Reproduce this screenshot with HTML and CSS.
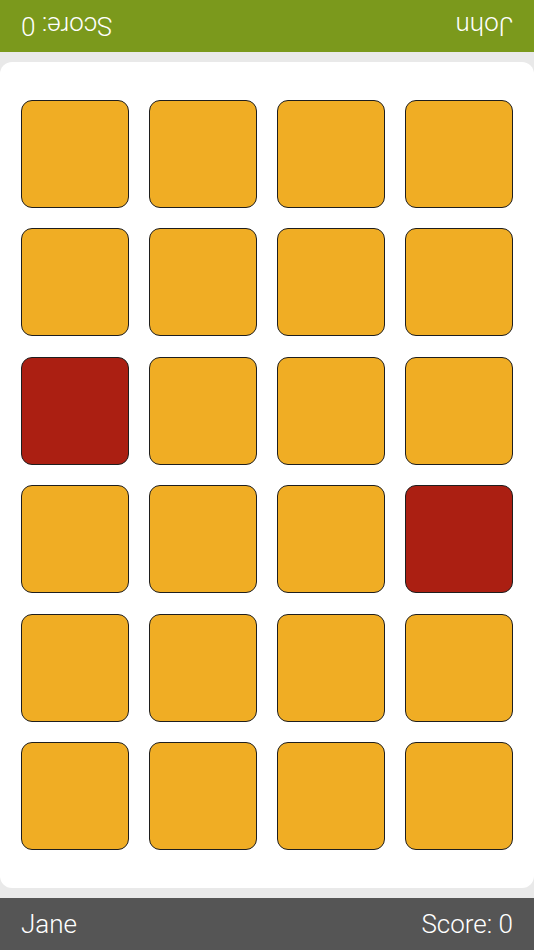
FILE: index.html
```html
<!DOCTYPE html>
<html>
<head>
<meta charset="utf-8">
<link rel="stylesheet" href="styles.css">
</head>
<body>
<div class="app">
  <header class="bar bar-top">
    <div class="bar-inner flipped">
      <span class="name">John</span>
      <span class="score">Score: 0</span>
    </div>
  </header>
  <main class="board-wrap">
    <div class="board">
      <div class="tile"></div><div class="tile"></div><div class="tile"></div><div class="tile"></div>
      <div class="tile"></div><div class="tile"></div><div class="tile"></div><div class="tile"></div>
      <div class="tile red"></div><div class="tile"></div><div class="tile"></div><div class="tile"></div>
      <div class="tile"></div><div class="tile"></div><div class="tile"></div><div class="tile red"></div>
      <div class="tile"></div><div class="tile"></div><div class="tile"></div><div class="tile"></div>
      <div class="tile"></div><div class="tile"></div><div class="tile"></div><div class="tile"></div>
    </div>
  </main>
  <footer class="bar bar-bottom">
    <div class="bar-inner">
      <span class="name">Jane</span>
      <span class="score">Score: 0</span>
    </div>
  </footer>
</div>
</body>
</html>
```
FILE: styles.css
```css
html, body {
  margin: 0;
  padding: 0;
}
body {
  background: #e9e9e9;
  font-family: Roboto, "Liberation Sans", sans-serif;
}
.app {
  width: 534px;
  height: 950px;
  display: flex;
  flex-direction: column;
}
.bar {
  height: 52px;
  flex: 0 0 52px;
  color: #ffffff;
}
.bar-top {
  background: #7b991c;
}
.bar-bottom {
  background: #555555;
}
.bar-inner {
  height: 100%;
  display: flex;
  align-items: center;
  justify-content: space-between;
  padding: 0 21px;
  font-size: 26px;
  font-weight: 300;
}
.flipped {
  transform: rotate(180deg);
}
.board-wrap {
  flex: 1;
  padding: 10px 0;
  display: flex;
}
.board {
  flex: 1;
  background: #ffffff;
  border-radius: 12px;
  padding: 38px 21px;
  display: grid;
  grid-template-columns: repeat(4, 108px);
  grid-template-rows: repeat(6, 108px);
  column-gap: 20px;
  row-gap: 20.4px;
}
.tile {
  box-sizing: border-box;
  background: #f0ad24;
  border: 1.5px solid #1e1e1e;
  border-radius: 11px;
}
.tile.red {
  background: #ab1f12;
}
```
